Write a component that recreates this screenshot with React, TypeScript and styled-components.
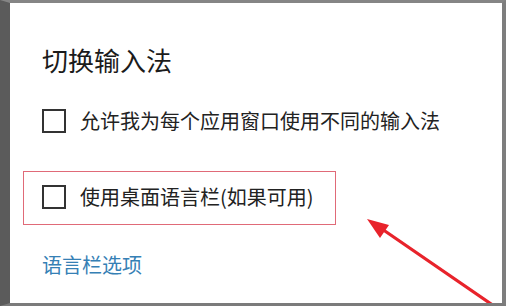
import React from "react";
import styled, { createGlobalStyle } from "styled-components";

const GlobalStyle = createGlobalStyle`
  html, body {
    margin: 0;
    padding: 0;
    background: #ffffff;
  }
  body {
    font-family: "Noto Sans CJK SC", "Noto Sans", sans-serif;
  }
`;

const App = () => {
  return (
    <>
      <GlobalStyle />
      <Frame>
        <Content>
          <Title>切换输入法</Title>

          <Row>
            <Box />
            <Label>允许我为每个应用窗口使用不同的输入法</Label>
          </Row>

          <Marked>
            <Row>
              <Box />
              <Label>使用桌面语言栏(如果可用)</Label>
            </Row>
          </Marked>

          <Link>语言栏选项</Link>
        </Content>

        {/* red annotation arrow */}
        <Arrow viewBox="0 0 492 300" width="492" height="300">
          <line x1="484" y1="303" x2="372" y2="226" stroke="#e8232b" strokeWidth="3.2" strokeLinecap="round" />
          <polygon points="357,216 379,222 370,235" fill="#e8232b" />
        </Arrow>
      </Frame>
    </>
  );
};

export default App;

const Arrow = styled.svg`
  position: absolute;
  left: 0;
  top: 0;
  overflow: visible;
  pointer-events: none;
`;

const Link = styled.div`
  font-size: 20px;
  line-height: 36px;
  color: #3580b5;
  margin-top: 22px;
`;

const Marked = styled.div`
  width: 293px;
  border: 1px solid #e06a78;
  padding: 7px 0 9px 18px;
  margin-left: -19px;
  margin-top: 32px;
`;

const Label = styled.span`
  font-size: 20px;
  line-height: 36px;
  color: #222222;
`;

const Box = styled.span`
  width: 20px;
  height: 20px;
  border: 2px solid #333333;
  flex-shrink: 0;
`;

const Row = styled.div`
  display: flex;
  align-items: center;
  gap: 14px;
`;

const Title = styled.div`
  font-size: 26px;
  line-height: 36px;
  color: #1b1b1b;
  margin-bottom: 25px;
`;

const Content = styled.div`
  padding: 39px 0 0 32px;
`;

const Frame = styled.div`
  position: relative;
  width: 506px;
  height: 306px;
  box-sizing: border-box;
  background: #ffffff;
  border-top: 3px solid #858585;
  border-right: 4px solid #7e7e7e;
  border-bottom: 3px solid #7b7b7b;
  border-left: 10px solid #5b5b5b;
  overflow: hidden;
`;
